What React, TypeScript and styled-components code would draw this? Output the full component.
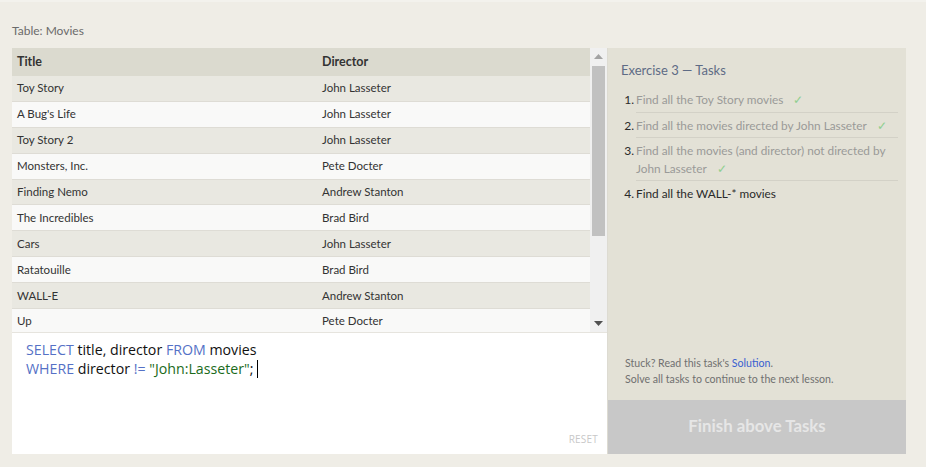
import React from "react";
import styled, { createGlobalStyle } from "styled-components";

const Global = createGlobalStyle`
  html, body { margin: 0; padding: 0; background: #efede6; }
  body { font-family: Lato, "Open Sans", sans-serif; }
`;

const Page = styled.div`
  width: 926px;
  height: 467px;
  box-sizing: border-box;
  border-top: 2px solid #f3f2ed;
  padding: 20px 20px 0 12px;
  display: flex;
  flex-direction: column;
`;

const Caption = styled.div`
  height: 26px;
  font-size: 12px;
  color: #6b6b6b;
  line-height: 17px;
`;

const Main = styled.div`
  display: flex;
  height: 406px;
`;

const LeftPanel = styled.div`
  width: 595px;
  display: flex;
  flex-direction: column;
  background: #fff;
`;

const TableArea = styled.div`
  height: 284px;
  display: flex;
  overflow: hidden;
`;

const Table = styled.div`
  width: 578px;
  display: flex;
  flex-direction: column;
`;

const Row = styled.div<{ $variant: "head" | "odd" | "even" }>`
  display: grid;
  grid-template-columns: 305px 1fr;
  flex: none;
  box-sizing: border-box;
  height: ${(p) => (p.$variant === "head" ? "28px" : "25.9px")};
  align-items: center;
  padding-left: 5px;
  padding-bottom: 1px;
  font-size: ${(p) => (p.$variant === "head" ? "12.5px" : "11.5px")};
  font-weight: ${(p) => (p.$variant === "head" ? 700 : 400)};
  color: #333;
  background: ${(p) =>
    p.$variant === "head" ? "#dbdacf" : p.$variant === "odd" ? "#e9e8e1" : "#f9f9f8"};
  border-bottom: ${(p) => (p.$variant === "head" ? "none" : "1px solid #dedcd5")};
`;

const Scrollbar = styled.div`
  width: 17px;
  background: #f0f0f0;
  display: flex;
  flex-direction: column;
  align-items: center;
`;

const Arrow = styled.div`
  height: 17px;
  display: flex;
  align-items: center;
  justify-content: center;
  width: 100%;
`;

const Thumb = styled.div`
  width: 13px;
  height: 170px;
  margin-top: 1px;
  background: #c1c1c1;
`;

const Spacer = styled.div`
  flex: 1;
`;

const Editor = styled.div`
  flex: 1;
  position: relative;
  border-top: 1px solid #e6e4de;
  padding: 8px 14px;
  font-family: "Comic Sans MS", "Open Sans", sans-serif;
  font-size: 14.2px;
  line-height: 18.5px;
  color: #111;
`;

const Kw = styled.span`
  color: #5571c6;
`;

const Str = styled.span`
  color: #1b6b1b;
`;

const Caret = styled.span`
  display: inline-block;
  width: 1px;
  height: 18px;
  background: #000;
  vertical-align: -4px;
  margin-left: 4px;
`;

const Reset = styled.div`
  position: absolute;
  right: 9px;
  bottom: 6px;
  font-size: 10px;
  color: #c8c8c8;
  letter-spacing: 0.2px;
`;

const RightPanel = styled.div`
  width: 298px;
  display: flex;
  flex-direction: column;
  background: #e3e1d6;
  border-left: 1px solid #dddbd2;
`;

const Tasks = styled.div`
  flex: 1;
  padding: 14px 8px 0 13px;
`;

const TasksTitle = styled.div`
  font-size: 13px;
  color: #5e6b85;
  margin-bottom: 9px;
`;

const TaskList = styled.ol`
  list-style: none;
  margin: 0;
  padding: 0;
`;

const TaskItem = styled.li<{ $done: boolean }>`
  display: flex;
  font-size: 11.8px;
  line-height: 17.5px;
  color: ${(p) => (p.$done ? "#9a9a98" : "#2a2a2a")};
`;

const Num = styled.span`
  box-sizing: border-box;
  width: 15px;
  flex: none;
  text-align: right;
  padding-right: 2px;
  padding-top: 4px;
  font-size: 12px;
  color: #2a2a2a;
`;

const TaskText = styled.span<{ $last?: boolean }>`
  flex: 1;
  min-width: 0;
  padding: 4px 0 3px;
  border-bottom: ${(p) => (p.$last ? "none" : "1px solid #d3d1c7")};
`;

const TaskLine = styled.span`
  display: block;
  white-space: nowrap;
`;

const Check = styled.span`
  color: #8fcf8f;
  margin-left: 10px;
`;

const Help = styled.div`
  padding: 0 0 13px 17px;
  font-size: 10.6px;
  line-height: 16px;
  color: #707070;
`;

const Link = styled.a`
  color: #3a5fd0;
  text-decoration: none;
`;

const FinishButton = styled.div`
  box-sizing: border-box;
  height: 54px;
  padding-bottom: 3px;
  background: #c8c8c8;
  display: flex;
  align-items: center;
  justify-content: center;
  font-size: 16.8px;
  font-weight: 700;
  color: #e6e6e6;
`;

const movies: [string, string][] = [
  ["Toy Story", "John Lasseter"],
  ["A Bug's Life", "John Lasseter"],
  ["Toy Story 2", "John Lasseter"],
  ["Monsters, Inc.", "Pete Docter"],
  ["Finding Nemo", "Andrew Stanton"],
  ["The Incredibles", "Brad Bird"],
  ["Cars", "John Lasseter"],
  ["Ratatouille", "Brad Bird"],
  ["WALL-E", "Andrew Stanton"],
  ["Up", "Pete Docter"],
];

const tasks = [
  { lines: ["Find all the Toy Story movies"], done: true },
  { lines: ["Find all the movies directed by John Lasseter"], done: true },
  { lines: ["Find all the movies (and director) not directed by", "John Lasseter"], done: true },
  { lines: ["Find all the WALL-* movies"], done: false },
];

export default function App() {
  return (
    <>
      <Global />
      <Page>
        <Caption>Table: Movies</Caption>
        <Main>
          <LeftPanel>
            <TableArea>
              <Table>
                <Row $variant="head">
                  <span>Title</span>
                  <span>Director</span>
                </Row>
                {movies.map(([t, d], i) => (
                  <Row key={t} $variant={i % 2 === 0 ? "odd" : "even"}>
                    <span>{t}</span>
                    <span>{d}</span>
                  </Row>
                ))}
              </Table>
              <Scrollbar>
                <Arrow>
                  <svg width="9" height="5" viewBox="0 0 9 5">
                    <path d="M0 5 L4.5 0 L9 5 Z" fill="#a3a3a3" />
                  </svg>
                </Arrow>
                <Thumb />
                <Spacer />
                <Arrow>
                  <svg width="9" height="5" viewBox="0 0 9 5">
                    <path d="M0 0 L9 0 L4.5 5 Z" fill="#505050" />
                  </svg>
                </Arrow>
              </Scrollbar>
            </TableArea>
            <Editor>
              <div>
                <Kw>SELECT</Kw> title, director <Kw>FROM</Kw> movies
              </div>
              <div>
                <Kw>WHERE</Kw> director <Kw>!=</Kw> <Str>"John:Lasseter"</Str>;
                <Caret />
              </div>
              <Reset>RESET</Reset>
            </Editor>
          </LeftPanel>
          <RightPanel>
            <Tasks>
              <TasksTitle>Exercise 3 — Tasks</TasksTitle>
              <TaskList>
                {tasks.map((t, i) => (
                  <TaskItem key={i} $done={t.done}>
                    <Num>{i + 1}.</Num>
                    <TaskText $last={i === tasks.length - 1}>
                      {t.lines.map((line, j) => (
                        <TaskLine key={j}>
                          {line}
                          {t.done && j === t.lines.length - 1 && <Check>✓</Check>}
                        </TaskLine>
                      ))}
                    </TaskText>
                  </TaskItem>
                ))}
              </TaskList>
            </Tasks>
            <Help>
              Stuck? Read this task's <Link href="#">Solution</Link>.
              <br />
              Solve all tasks to continue to the next lesson.
            </Help>
            <FinishButton>Finish above Tasks</FinishButton>
          </RightPanel>
        </Main>
      </Page>
    </>
  );
}
